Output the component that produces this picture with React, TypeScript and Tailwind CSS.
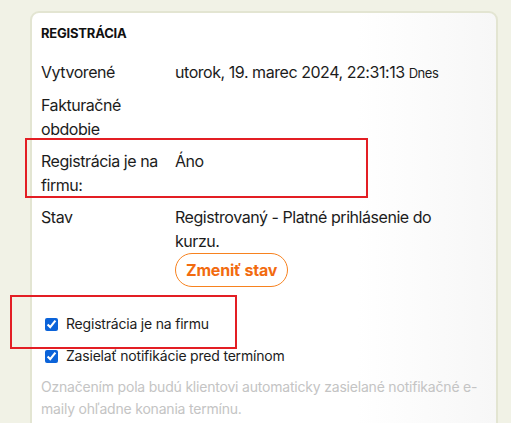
import React from "react";

export default function App() {
  const font = { fontFamily: "Inter, 'Noto Sans', sans-serif" };
  return (
    <div className="relative h-[423px] w-[511px] overflow-hidden bg-[#f1f2e6] text-[#1c1c1c]" style={font}>
      <div className="ml-[30px] mt-[11px] w-[468px] rounded-[9px] border-2 border-[#e3e5d2] bg-gradient-to-r from-white from-70% to-[#f7f7f7] pl-[9px] pr-[10px] pt-[12px] pb-[40px]">
        <div className="text-[13px] font-bold leading-4 tracking-[-0.2px] text-[#111]">REGISTRÁCIA</div>
        <div className="mt-[19px] flex flex-col gap-[8px] text-[16px] leading-6 tracking-[-0.45px]">
          <div className="flex">
            <div className="w-[134px] shrink-0">Vytvorené</div>
            <div>
              utorok, 19. marec 2024, 22:31:13 <span className="text-[13px]">Dnes</span>
            </div>
          </div>
          <div className="flex">
            <div className="w-[134px] shrink-0">
              Fakturačné
              <br />
              obdobie
            </div>
            <div></div>
          </div>
          <div className="flex">
            <div className="w-[134px] shrink-0">
              Registrácia je na
              <br />
              firmu:
            </div>
            <div>Áno</div>
          </div>
          <div className="flex">
            <div className="w-[134px] shrink-0">Stav</div>
            <div>
              Registrovaný - Platné prihlásenie do
              <br />
              kurzu.
              <div>
                <button className="h-[34px] rounded-full border border-[#f7821f] px-[10px] text-[16px] font-bold tracking-[-0.2px] text-[#f26b0f]">
                  Zmeniť stav
                </button>
              </div>
            </div>
          </div>
        </div>
        <div className="mt-[25px] flex flex-col gap-[8px] pl-[4px] text-[14px] leading-6 tracking-[-0.2px]">
          <label className="flex items-center gap-[8px]">
            <input type="checkbox" defaultChecked className="h-[13px] w-[13px] accent-[#0b63d9]" />
            Registrácia je na firmu
          </label>
          <label className="flex items-center gap-[8px]">
            <input type="checkbox" defaultChecked className="h-[13px] w-[13px] accent-[#0b63d9]" />
            Zasielať notifikácie pred termínom
          </label>
        </div>
        <div className="mt-[8px] text-[14px] leading-[22px] tracking-[-0.2px] text-[#c4c4c4]">
          Označením pola budú klientovi automaticky zasielané notifikačné e-maily ohľadne konania termínu.
        </div>
        <div className="mt-[4px] ml-[300px] h-[20px] w-[145px] rounded-t border-t-2 border-[#c9c9c9]"></div>
      </div>
      <div className="pointer-events-none absolute left-[25px] top-[138px] h-[60px] w-[343px] border-2 border-[#e31e24]"></div>
      <div className="pointer-events-none absolute left-[10px] top-[295px] h-[54px] w-[227px] border-2 border-[#e31e24]"></div>
    </div>
  );
}
